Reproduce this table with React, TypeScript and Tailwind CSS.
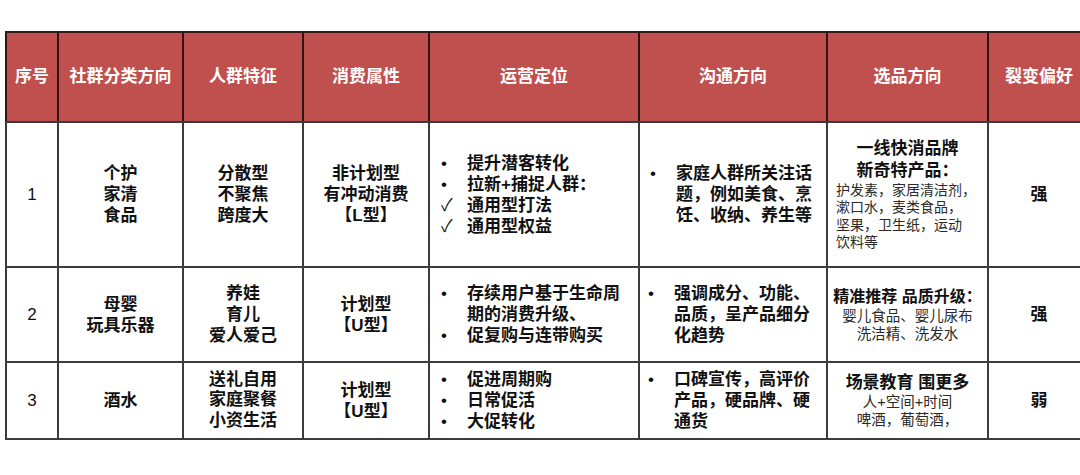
import React from "react";

const FONT = '"Liberation Sans", "Noto Sans CJK SC", sans-serif';

function Lines({ lines }: { lines: string[] }) {
  return (
    <div className="flex flex-col items-center leading-[21px]">
      {lines.map((l, i) => (
        <div key={i}>{l}</div>
      ))}
    </div>
  );
}

type Item = { mark: string; lines: string[] };

function List({ items, left = 11, gap = 26 }: { items: Item[]; left?: number; gap?: number }) {
  return (
    <div className="flex flex-col leading-[21px] text-left" style={{ paddingLeft: left }}>
      {items.map((it, i) => (
        <div key={i} className="flex">
          <span className="shrink-0 font-normal" style={{ width: gap }}>
            {it.mark}
          </span>
          <div className="flex flex-col">
            {it.lines.map((l, j) => (
              <div key={j}>{l}</div>
            ))}
          </div>
        </div>
      ))}
    </div>
  );
}

const th =
  "bg-[#c0504d] text-white font-semibold text-[17px] border-x-2 border-x-[#2e1414] border-t-2 border-t-[#3a1a1a] border-b-2 border-b-[#3a3a3a] text-center align-middle";
const base = "border-2 border-[#3c3c3c] text-center align-middle text-[17px] text-[#111] p-0";
const td = base + " font-semibold";
const tdNum = base + " font-normal";

export default function App() {
  return (
    <div className="w-[1080px] h-[475px] bg-white overflow-hidden" style={{ fontFamily: FONT }}>
      <div className="pt-[31px] pl-[5px]">
        <table className="table-fixed border-collapse w-[1084px]">
          <colgroup>
            <col className="w-[52px]" />
            <col className="w-[125px]" />
            <col className="w-[120px]" />
            <col className="w-[126px]" />
            <col className="w-[210px]" />
            <col className="w-[188px]" />
            <col className="w-[161px]" />
            <col className="w-[102px]" />
          </colgroup>
          <thead>
            <tr className="h-[90px]">
              <th className={th}>序号</th>
              <th className={th}>社群分类方向</th>
              <th className={th}>人群特征</th>
              <th className={th}>消费属性</th>
              <th className={th}>运营定位</th>
              <th className={th}>沟通方向</th>
              <th className={th}>选品方向</th>
              <th className={th}>裂变偏好</th>
            </tr>
          </thead>
          <tbody>
            <tr className="h-[145px]">
              <td className={tdNum}>1</td>
              <td className={td}>
                <Lines lines={["个护", "家清", "食品"]} />
              </td>
              <td className={td}>
                <Lines lines={["分散型", "不聚焦", "跨度大"]} />
              </td>
              <td className={td}>
                <Lines lines={["非计划型", "有冲动消费", "【L型】"]} />
              </td>
              <td className={td}>
                <List
                  items={[
                    { mark: "•", lines: ["提升潜客转化"] },
                    { mark: "•", lines: ["拉新+捕捉人群："] },
                    { mark: "✓", lines: ["通用型打法"] },
                    { mark: "✓", lines: ["通用型权益"] },
                  ]}
                />
              </td>
              <td className={td}>
                <List
                  left={10}
                  items={[{ mark: "•", lines: ["家庭人群所关注话", "题，例如美食、烹", "饪、收纳、养生等"] }]}
                />
              </td>
              <td className={td}>
                <div className="flex flex-col">
                  <div className="leading-[22px]">一线快消品牌</div>
                  <div className="leading-[22px]">新奇特产品：</div>
                  <div className="text-left pl-[8px] text-[14px] leading-[17.5px] font-normal text-[#2a2a2a]">
                    <div>护发素，家居清洁剂，</div>
                    <div>漱口水，麦类食品，</div>
                    <div>坚果，卫生纸，运动</div>
                    <div>饮料等</div>
                  </div>
                </div>
              </td>
              <td className={td}>强</td>
            </tr>
            <tr className="h-[95px]">
              <td className={tdNum}>2</td>
              <td className={td}>
                <Lines lines={["母婴", "玩具乐器"]} />
              </td>
              <td className={td}>
                <Lines lines={["养娃", "育儿", "爱人爱己"]} />
              </td>
              <td className={td}>
                <Lines lines={["计划型", "【U型】"]} />
              </td>
              <td className={td}>
                <List
                  items={[
                    { mark: "•", lines: ["存续用户基于生命周", "期的消费升级、"] },
                    { mark: "•", lines: ["促复购与连带购买"] },
                  ]}
                />
              </td>
              <td className={td}>
                <List
                  left={8}
                  items={[{ mark: "•", lines: ["强调成分、功能、", "品质，呈产品细分", "化趋势"] }]}
                />
              </td>
              <td className={td}>
                <div className="flex flex-col items-center">
                  <div className="leading-[20px] text-[16px] whitespace-nowrap">精准推荐 品质升级：</div>
                  <div className="text-[14.5px] leading-[18px] font-normal text-[#2a2a2a]">
                    <div>婴儿食品、婴儿尿布</div>
                    <div>洗洁精、洗发水</div>
                  </div>
                </div>
              </td>
              <td className={td}>强</td>
            </tr>
            <tr className="h-[77px]">
              <td className={tdNum}>3</td>
              <td className={td}>
                <Lines lines={["酒水"]} />
              </td>
              <td className={td}>
                <div className="flex flex-col items-center leading-[20.5px]">
                  <div>送礼自用</div>
                  <div>家庭聚餐</div>
                  <div>小资生活</div>
                </div>
              </td>
              <td className={td}>
                <Lines lines={["计划型", "【U型】"]} />
              </td>
              <td className={td}>
                <div className="leading-[20px]">
                  <List
                    items={[
                      { mark: "•", lines: ["促进周期购"] },
                      { mark: "•", lines: ["日常促活"] },
                      { mark: "•", lines: ["大促转化"] },
                    ]}
                  />
                </div>
              </td>
              <td className={td}>
                <List
                  left={8}
                  items={[{ mark: "•", lines: ["口碑宣传，高评价", "产品，硬品牌、硬", "通货"] }]}
                />
              </td>
              <td className={td}>
                <div className="flex flex-col items-center">
                  <div className="leading-[20px]">场景教育 围更多</div>
                  <div className="text-[14.5px] leading-[18px] font-normal text-[#2a2a2a]">
                    <div>人+空间+时间</div>
                    <div>啤酒，葡萄酒，</div>
                  </div>
                </div>
              </td>
              <td className={td}>弱</td>
            </tr>
          </tbody>
        </table>
      </div>
    </div>
  );
}
